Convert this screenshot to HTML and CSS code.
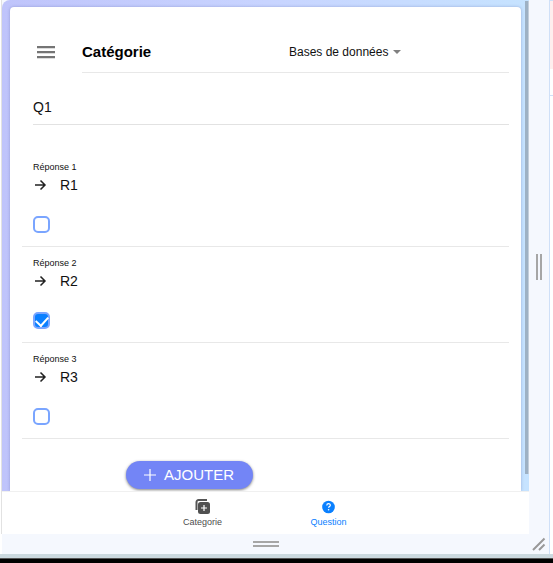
FILE: index.html
```html
<!DOCTYPE html>
<html lang="fr">
<head>
<meta charset="utf-8">
<meta name="viewport" content="width=device-width, initial-scale=1">
<title>Question</title>
<link rel="stylesheet" href="styles.css">
</head>
<body>
<div class="workspace">
  <div class="rail"></div>
  <div class="stage">
    <div class="device">
      <main class="screen">
        <form class="card">
          <header class="head">
            <button class="menu" type="button" aria-label="Menu">
              <svg width="20" height="14" viewBox="0 0 20 14" fill="#757575"><path d="M1 1h18v2.300H1zM1 6h18v2.300H1zM1 11h18v2.300H1z"/></svg>
            </button>
            <div class="head-item">
              <label class="title" for="category">Catégorie</label>
              <div class="picker">
                <select id="category"><option>Bases de données</option></select>
                <svg width="8" height="4" viewBox="0 0 8 4" fill="#808080"><path d="M0 0h8L4 4z"/></svg>
              </div>
            </div>
          </header>
          <input class="question" type="text" value="Q1" aria-label="Question">
          <section class="answer">
            <label class="caption" for="r1">Réponse 1</label>
            <div class="field">
              <svg width="14" height="12" viewBox="0 0 14 12" fill="none" stroke="#222" stroke-width="1.5"><path d="M2 6h10M7.500 1.500L12 6l-4.500 4.500"/></svg>
              <input id="r1" type="text" value="R1">
            </div>
            <input class="check" type="checkbox" aria-label="Réponse 1 correcte">
          </section>
          <section class="answer">
            <label class="caption" for="r2">Réponse 2</label>
            <div class="field">
              <svg width="14" height="12" viewBox="0 0 14 12" fill="none" stroke="#222" stroke-width="1.5"><path d="M2 6h10M7.500 1.500L12 6l-4.500 4.500"/></svg>
              <input id="r2" type="text" value="R2">
            </div>
            <input class="check" type="checkbox" aria-label="Réponse 2 correcte" checked>
          </section>
          <section class="answer">
            <label class="caption" for="r3">Réponse 3</label>
            <div class="field">
              <svg width="14" height="12" viewBox="0 0 14 12" fill="none" stroke="#222" stroke-width="1.5"><path d="M2 6h10M7.500 1.500L12 6l-4.500 4.500"/></svg>
              <input id="r3" type="text" value="R3">
            </div>
            <input class="check" type="checkbox" aria-label="Réponse 3 correcte">
          </section>
          <button class="add" type="button">
            <svg width="12" height="12" viewBox="0 0 12 12" fill="none" stroke="#fff" stroke-width="1.2"><path d="M6 0v12M0 6h12"/></svg>
            AJOUTER
          </button>
        </form>
        <div class="scrollbar"></div>
      </main>
      <nav class="tabs">
        <a class="tab" href="#categorie">
          <svg width="16" height="16" viewBox="0 0 16 16"><path d="M1.500 12V4a2 2 0 0 1 2-2H12" fill="none" stroke="#555" stroke-width="2"/><rect x="3" y="4" width="12" height="12" rx="2.500" fill="#505050"/><path d="M9 7v6M6 10h6" stroke="#fff" stroke-width="1.200"/></svg>
          <span>Categorie</span>
        </a>
        <a class="tab active" href="#question">
          <svg width="16" height="16" viewBox="0 0 16 16"><circle cx="7.500" cy="9" r="6.300" fill="#0a80ff"/><path d="M5.800 7.400c0-2.300 3.500-2.200 3.500-.2 0 1.300-1.700 1.300-1.700 2.600" fill="none" stroke="#fff" stroke-width="1.200"/><circle cx="7.600" cy="11.800" r=".8" fill="#fff"/></svg>
          <span>Question</span>
        </a>
      </nav>
    </div>
    <div class="grip-right"><i class="bars"></i></div>
    <div class="grip-bottom"><i class="bars flat"></i></div>
    <div class="grip-corner">
      <svg width="14" height="14" viewBox="0 0 14 14" stroke="#999" stroke-width="2"><path d="M1 13L12.500 1.500M7 13l5.500-5.500"/></svg>
    </div>
  </div>
  <aside class="side"><div class="notice"></div></aside>
</div>
<div class="edge"></div>
<div class="below"></div>
</body>
</html>
```
FILE: styles.css
```css
* {
  box-sizing: border-box;
}

body {
  margin: 0;
  min-height: 100vh;
  display: flex;
  flex-direction: column;
  background: #fff;
  color: #111;
  font: 14px/20px "Liberation Sans", Arial, sans-serif;
}

button,
input,
select {
  margin: 0;
  padding: 0;
  border: 0;
  background: none;
  color: inherit;
  font: inherit;
}

svg {
  display: block;
  flex: none;
}

.workspace {
  flex: 1;
  display: grid;
  grid-template-columns: 2px 1fr 4px;
}

.rail {
  margin-bottom: 20px;
  border-right: 1px solid #e2e2e2;
}

.stage {
  display: grid;
  grid-template-columns: 1fr 20px;
  grid-template-rows: 1fr 20px;
  background: #f5f8fe;
}

.device {
  display: flex;
  flex-direction: column;
}

.screen {
  position: relative;
  flex: 1 0 0;
  display: flex;
  padding: 7px 8px 0;
  border-top-left-radius: 8px;
  background: linear-gradient(90deg, #bfc4fb, #c8d4ff 50%, #c6e3ff);
  overflow: hidden;
}

.card {
  flex: 1;
  padding: 24px 12px 2px;
  border-radius: 4px 4px 0 0;
  background: #fff;
  box-shadow: 0 0 3px rgba(60, 70, 140, 0.35);
}

.head {
  display: flex;
  align-items: center;
  padding-left: 14px;
}

.menu {
  width: 46px;
}

.head-item {
  flex: 1;
  display: grid;
  grid-template-columns: 207px 1fr;
  align-items: center;
  height: 42px;
  border-bottom: 1px solid #e8e8e8;
}

.title {
  color: #000;
  font-size: 15px;
  font-weight: bold;
}

.picker {
  display: flex;
  align-items: center;
  gap: 4px;
}

.picker select {
  appearance: none;
  font-size: 12px;
}

.question {
  display: block;
  width: calc(100% - 11px);
  height: 36px;
  margin: 16px 0 26px 11px;
  border-bottom: 1px solid #e2e2e2;
}

.answer {
  display: flex;
  flex-direction: column;
  height: 96px;
  padding: 11px 0 0 11px;
  border-bottom: 1px solid #e8e8e8;
}

.caption {
  margin-bottom: 2px;
  font-size: 9px;
  line-height: 11px;
}

.field {
  display: flex;
  align-items: center;
  gap: 13px;
  margin-bottom: 21px;
}

.field input {
  flex: 1;
  height: 20px;
}

.check {
  appearance: none;
  display: grid;
  place-items: center;
  width: 17px;
  height: 17px;
  border: 2px solid #7aa5ff;
  border-radius: 5px;
}

.check:checked {
  background: #0a80ff;
}

.check:checked::after {
  content: "";
  width: 6px;
  height: 10px;
  margin-bottom: 3px;
  border: solid #fff;
  border-width: 0 2px 2px 0;
  transform: rotate(42deg);
}

.add {
  display: flex;
  align-items: center;
  gap: 8px;
  height: 28px;
  margin: 22px 0 0 104px;
  padding: 0 19px 0 18px;
  border-radius: 14px;
  background: #7385f6;
  box-shadow: 0 1px 3px rgba(0, 0, 0, 0.5);
  color: #fff;
  font-size: 15px;
}

.scrollbar {
  position: absolute;
  top: 1px;
  right: 0;
  bottom: 17px;
  width: 4px;
  border-right: 1px solid #c3cedb;
  background: #9eb1c4;
}

.tabs {
  display: flex;
  justify-content: center;
  height: 43px;
  border-top: 1px solid #f0f0f0;
  background: #fff;
}

.tab {
  display: flex;
  flex-direction: column;
  align-items: center;
  gap: 3px;
  width: 126px;
  padding-top: 6px;
  color: #4d4d4d;
  font-size: 9px;
  line-height: 11px;
  text-decoration: none;
}

.tab.active {
  color: #0a80ff;
}

.grip-right,
.grip-bottom,
.grip-corner {
  display: flex;
  align-items: center;
  justify-content: center;
}

.bars {
  width: 6px;
  height: 26px;
  border: solid #a6a6a6;
  border-width: 0 2px;
}

.bars.flat {
  width: 26px;
  height: 6px;
  border-width: 2px 0;
}

.side {
  border-left: 1px solid #cfe0f8;
}

.notice {
  height: 96px;
  border-top: 1px solid #cfe0f8;
  border-bottom: 1px solid #cfe0f8;
  background: linear-gradient(#ffeeee 68px, #fff 68px);
}

.edge {
  height: 4px;
  background: #cbd9df;
}

.below {
  height: 5px;
  border-top: 1px solid #555;
  background: #000;
}
```
